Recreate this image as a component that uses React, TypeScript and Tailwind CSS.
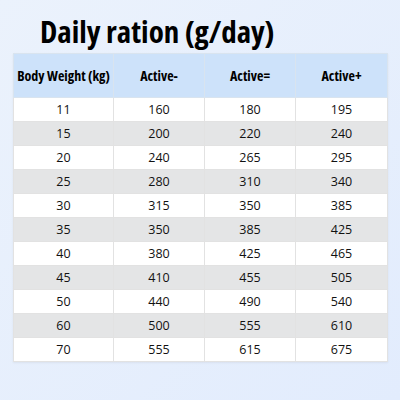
const ROWS: [number, number, number, number][] = [
  [11, 160, 180, 195],
  [15, 200, 220, 240],
  [20, 240, 265, 295],
  [25, 280, 310, 340],
  [30, 315, 350, 385],
  [35, 350, 385, 425],
  [40, 380, 425, 465],
  [45, 410, 455, 505],
  [50, 440, 490, 540],
  [60, 500, 555, 610],
  [70, 555, 615, 675],
]

const HEADERS = ['Body Weight (kg)', 'Active-', 'Active=', 'Active+']

export default function App() {
  return (
    <div className="w-[400px] h-[400px] bg-gradient-to-br from-[#ebf2fc] to-[#e2ecfd] font-['Open_Sans',sans-serif] text-black">
      <h1 className="pl-[40px] pt-[11px] h-[53px] text-[31px] leading-[40px] font-bold [font-stretch:75%]">
        Daily ration (g/day)
      </h1>
      <table className="ml-[13px] w-[374px] border-collapse table-fixed shadow-[0_1px_2px_rgba(0,0,0,0.06)]">
        <colgroup>
          <col className="w-[100px]" />
          <col className="w-[91px]" />
          <col className="w-[91px]" />
          <col className="w-[92px]" />
        </colgroup>
        <thead>
          <tr className="h-[44px] bg-[#cde2fa]">
            {HEADERS.map((h) => (
              <th
                key={h}
                className="border border-[#d9e4ef] text-[14px] font-bold [font-stretch:75%] text-center px-0 whitespace-nowrap"
              >
                {h}
              </th>
            ))}
          </tr>
        </thead>
        <tbody>
          {ROWS.map((row, i) => (
            <tr key={row[0]} className={i % 2 === 0 ? 'h-[24px] bg-white' : 'h-[24px] bg-[#e4e5e6]'}>
              {row.map((v, j) => (
                <td
                  key={j}
                  className="border border-[#e2e2e2] text-[12.5px] text-center text-[#111] p-0 leading-[23px]"
                >
                  {v}
                </td>
              ))}
            </tr>
          ))}
        </tbody>
      </table>
    </div>
  )
}
